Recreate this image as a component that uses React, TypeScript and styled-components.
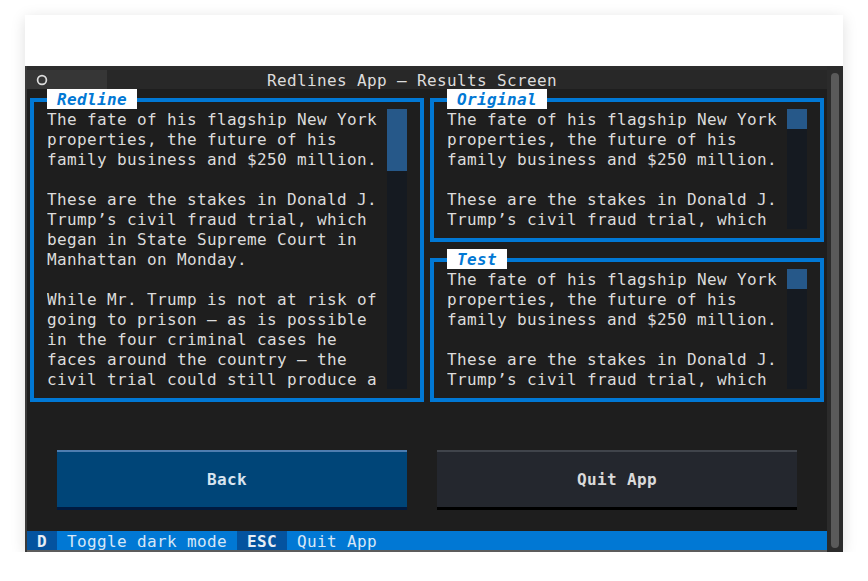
import styled, { createGlobalStyle } from "styled-components";

const GlobalStyle = createGlobalStyle`
  html, body {
    margin: 0;
    padding: 0;
    background: #ffffff;
  }
  * {
    box-sizing: border-box;
  }
`;

const MONO = `"DejaVu Sans Mono", "Liberation Mono", monospace`;

const Card = styled.div`
  margin: 15px 0 0 25px;
  width: 818px;
  height: 537px;
  background: #ffffff;
  box-shadow: 0 3px 14px rgba(0, 0, 0, 0.13);
  display: flex;
  flex-direction: column;
`;

const TopBlank = styled.div`
  height: 51px;
  background: #ffffff;
`;

const Terminal = styled.div`
  height: 486px;
  display: flex;
  font-family: ${MONO};
  font-size: 16px;
  letter-spacing: 0.37px;
  line-height: 22px;
`;

const Screen = styled.div`
  width: 802px;
  border-left: 2px solid #3a3a3a;
  background: #1e1e1e;
  display: flex;
  flex-direction: column;
`;

const TopStrip = styled.div`
  height: 4px;
  background: #2d2d2d;
`;

const Header = styled.div`
  height: 20px;
  background: #282828;
  color: #dcdcdc;
  display: flex;
  overflow: hidden;
`;

const HeaderIcon = styled.div`
  width: 80px;
  height: 20px;
  background: #363636;
  display: flex;
  align-items: center;
  padding: 1px 0 0 9px;
`;

const HeaderTitle = styled.div`
  height: 20px;
  padding-left: 160px;
  white-space: pre;
`;

const Body = styled.div`
  height: 440px;
  display: flex;
  flex-direction: column;
`;

const PanelGrid = styled.div`
  display: grid;
  grid-template-columns: 400px 400px;
  grid-template-rows: 160px 160px;
  height: 320px;
`;

const PanelOuter = styled.div<{ $span?: boolean }>`
  position: relative;
  padding: 9px 3px 7px 3px;
  grid-row: ${(p) => (p.$span ? "1 / span 2" : "auto")};
`;

const PanelBox = styled.div`
  height: 100%;
  border: 4px solid #0178d4;
  padding: 7px 13px 9px 13px;
  display: flex;
`;

const PanelLabel = styled.div`
  position: absolute;
  left: 20px;
  top: 0;
  height: 20px;
  overflow: hidden;
  padding: 0 10px;
  background: #ffffff;
  color: #0178d4;
  font-weight: bold;
  font-style: italic;
  white-space: pre;
`;

const PanelText = styled.div`
  width: 340px;
  padding-top: 1px;
  color: #dcdcdc;
  line-height: 20px;
  white-space: pre;
  overflow: hidden;
`;

const ScrollTrack = styled.div`
  width: 20px;
  height: 100%;
  background: #151a21;
`;

const ScrollThumb = styled.div<{ $h: number }>`
  height: ${(p) => p.$h}px;
  background: #265889;
`;

const ButtonRow = styled.div`
  margin-top: 41px;
  display: flex;
  padding-left: 30px;
  gap: 30px;
`;

const Button = styled.div<{ $primary?: boolean; $w: number }>`
  width: ${(p) => p.$w}px;
  height: 60px;
  display: flex;
  align-items: center;
  justify-content: center;
  padding-right: ${(p) => (p.$primary ? 10 : 0)}px;
  font-weight: bold;
  color: ${(p) => (p.$primary ? "#d8e4f0" : "#dadada")};
  background: ${(p) => (p.$primary ? "#004578" : "#24272e")};
  border-top: 2px solid ${(p) => (p.$primary ? "#4e7db0" : "#40444b")};
  border-bottom: 3px solid ${(p) => (p.$primary ? "#001a40" : "#000000")};
`;

const Footer = styled.div`
  height: 20px;
  margin-top: 19px;
  background: #0178d4;
  display: flex;
  overflow: hidden;
  white-space: pre;
`;

const FooterKey = styled.span`
  height: 20px;
  background: #04539f;
  color: #e6edf5;
  font-weight: bold;
`;

const FooterDesc = styled.span`
  height: 20px;
  color: #d6e7f7;
`;

const BottomLine = styled.div`
  height: 2px;
  background: #5c5c5c;
`;

const OuterScroll = styled.div`
  width: 16px;
  background: #2b2b2b;
  padding: 7px 4px 4px 4px;
`;

const OuterThumb = styled.div`
  height: 100%;
  background: #5a5a5a;
  border-radius: 4px;
`;

const story = [
  "The fate of his flagship New York",
  "properties, the future of his",
  "family business and $250 million.",
  "",
  "These are the stakes in Donald J.",
  "Trump’s civil fraud trial, which",
  "began in State Supreme Court in",
  "Manhattan on Monday.",
  "",
  "While Mr. Trump is not at risk of",
  "going to prison — as is possible",
  "in the four criminal cases he",
  "faces around the country — the",
  "civil trial could still produce a",
];

interface PanelProps {
  title: string;
  rows: number;
  thumb: number;
  span?: boolean;
}

function Panel({ title, rows, thumb, span }: PanelProps) {
  return (
    <PanelOuter $span={span}>
      <PanelBox>
        <PanelText>{story.slice(0, rows).join("\n")}</PanelText>
        <ScrollTrack>
          <ScrollThumb $h={thumb} />
        </ScrollTrack>
      </PanelBox>
      <PanelLabel>{title}</PanelLabel>
    </PanelOuter>
  );
}

export default function App() {
  return (
    <>
      <GlobalStyle />
      <Card>
        <TopBlank />
        <Terminal>
          <Screen>
            <TopStrip />
            <Header>
              <HeaderIcon>
                <svg width="12" height="12" viewBox="0 0 12 12">
                  <circle cx="6" cy="6" r="4.4" fill="none" stroke="#dcdcdc" strokeWidth="1.7" />
                </svg>
              </HeaderIcon>
              <HeaderTitle>Redlines App — Results Screen</HeaderTitle>
            </Header>
            <Body>
              <PanelGrid>
                <Panel title="Redline" rows={14} thumb={62} span />
                <Panel title="Original" rows={6} thumb={20} />
                <Panel title="Test" rows={6} thumb={20} />
              </PanelGrid>
              <ButtonRow>
                <Button $primary $w={350}>Back</Button>
                <Button $w={360}>Quit App</Button>
              </ButtonRow>
            </Body>
            <Footer>
              <FooterKey> D </FooterKey>
              <FooterDesc> Toggle dark mode </FooterDesc>
              <FooterKey> ESC </FooterKey>
              <FooterDesc> Quit App </FooterDesc>
            </Footer>
            <BottomLine />
          </Screen>
          <OuterScroll>
            <OuterThumb />
          </OuterScroll>
        </Terminal>
      </Card>
    </>
  );
}
